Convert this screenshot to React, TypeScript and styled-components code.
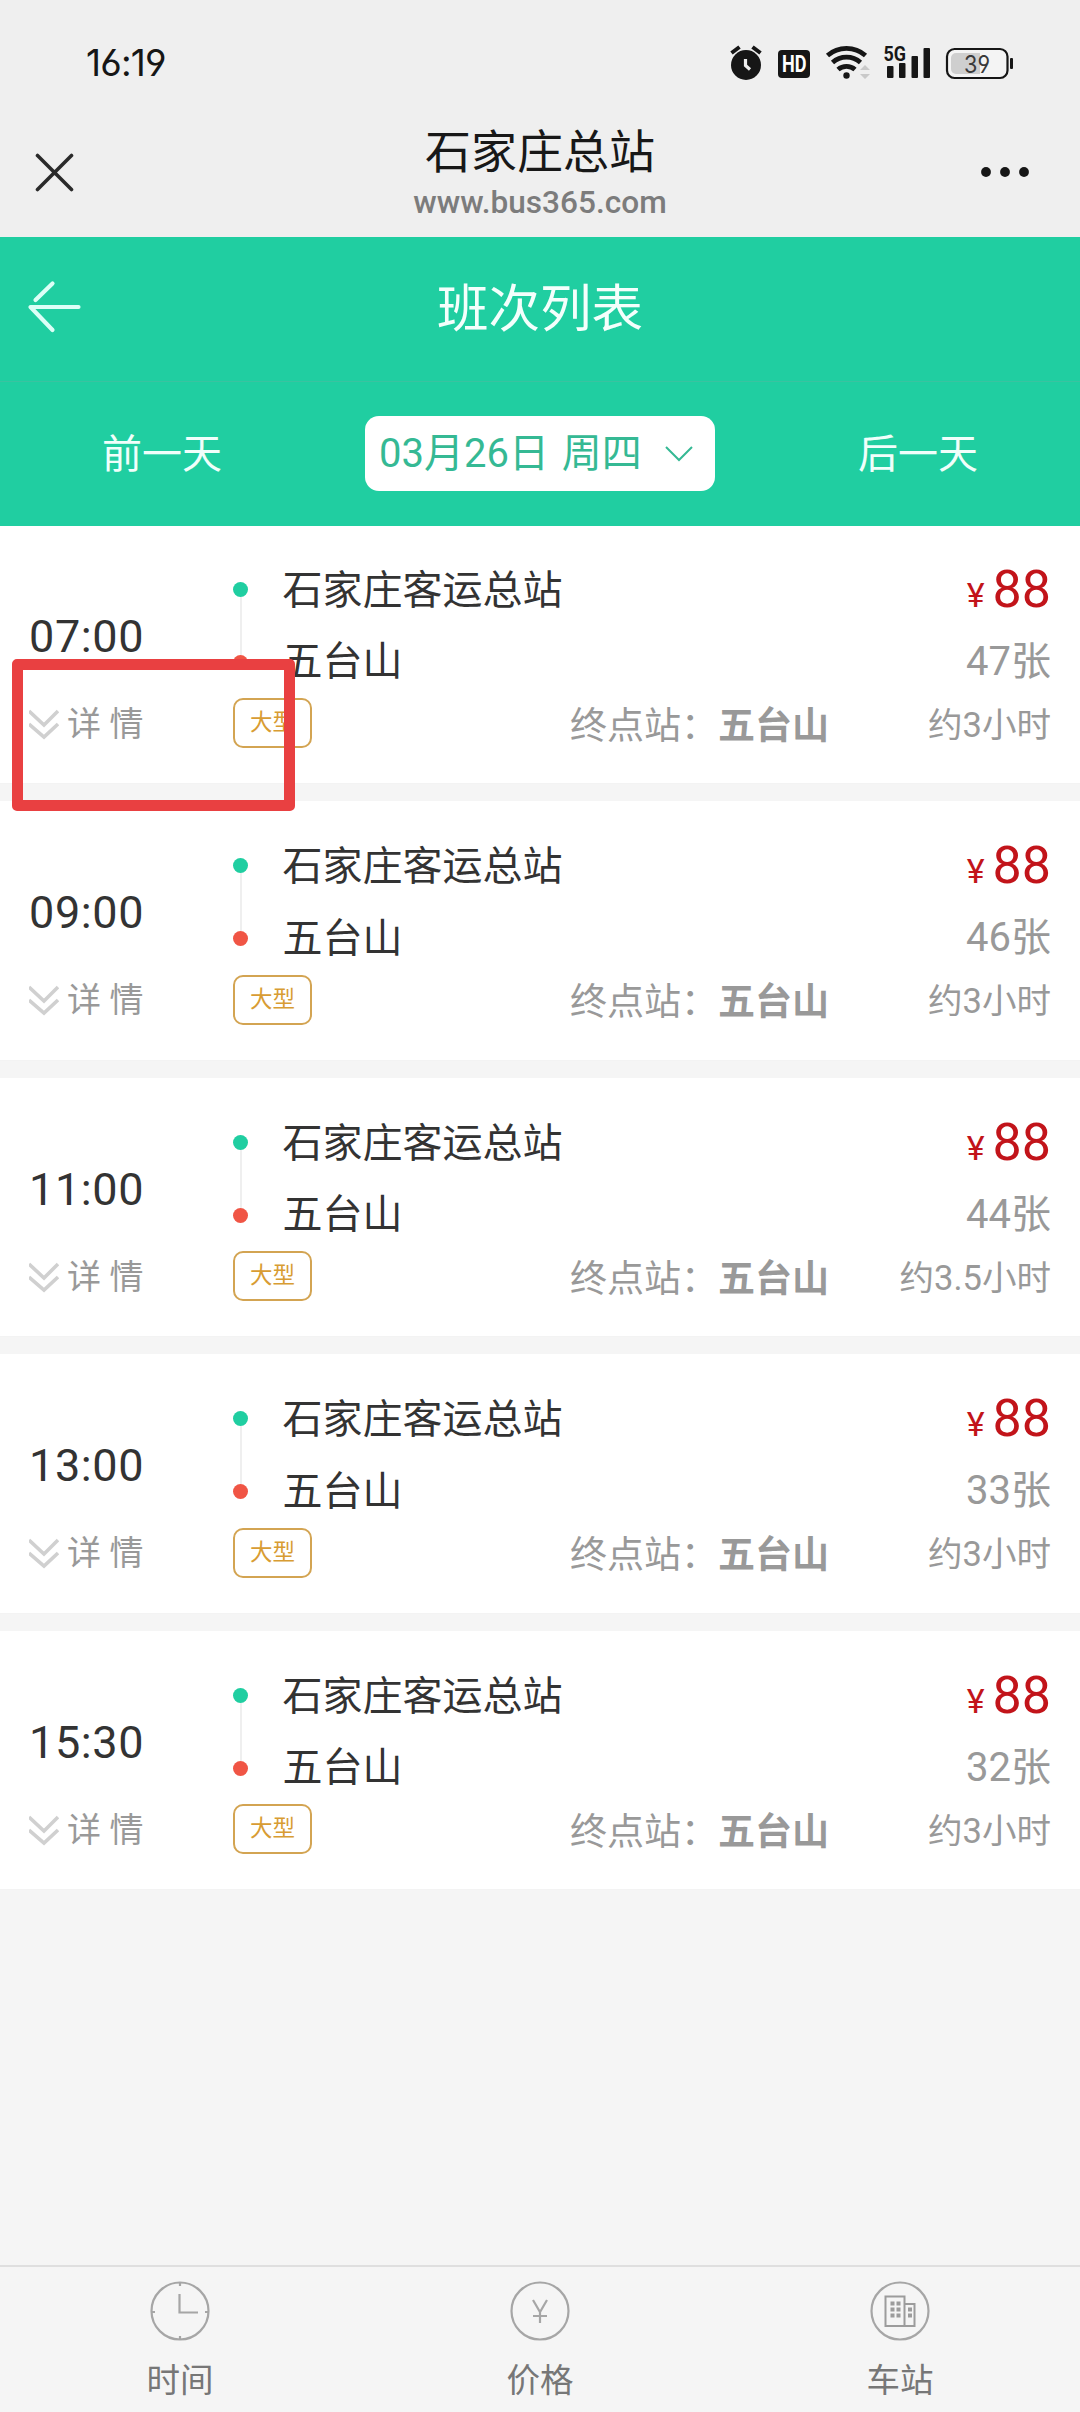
import React from 'react';
import styled, { createGlobalStyle } from 'styled-components';

const GlobalStyle = createGlobalStyle`
  * { box-sizing: border-box; }
  body {
    margin: 0;
    background: #f5f5f5;
    font-family: Roboto, "Noto Sans CJK SC", sans-serif;
    color: #333;
  }
  svg { display: block; }
`;

const Page = styled.div`
  width: 1080px;
  height: 2412px;
  display: flex;
  flex-direction: column;
  position: relative;
  overflow: hidden;
  background: #f5f5f5;
`;

const StatusBar = styled.div`
  height: 110px;
  flex: none;
  display: flex;
  justify-content: space-between;
  align-items: center;
  padding: 16px 66px 0 86px;
  background: #efefef;
`;

const Clock = styled.span`
  font-family: Inter, Roboto, sans-serif;
  font-feature-settings: "cv03", "cv04";
  font-size: 37px;
  line-height: 44px;
  font-weight: 400;
  letter-spacing: -0.8px;
  color: #161616;
`;

const StatusIcons = styled.div`
  display: flex;
  align-items: center;
`;

const BrowserBar = styled.div`
  height: 127px;
  flex: none;
  display: grid;
  grid-template-columns: 200px 1fr 200px;
  background: #efefef;
`;

const BrowserSide = styled.div<{ $end?: boolean }>`
  display: flex;
  align-items: center;
  justify-content: ${p => (p.$end ? 'flex-end' : 'flex-start')};
  padding: 0 ${p => (p.$end ? 50 : 34)}px;
  height: 124px;
`;

const BrowserTitle = styled.div`
  text-align: center;
  padding-top: 12px;
`;

const SiteName = styled.div`
  font-size: 46px;
  line-height: 61px;
  color: #181818;
  font-weight: 400;
`;

const SiteUrl = styled.div`
  font-size: 31.6px;
  line-height: 40px;
  font-weight: 500;
  color: #7c7c7c;
`;

const NavBar = styled.header`
  height: 145px;
  flex: none;
  display: grid;
  grid-template-columns: 200px 1fr 200px;
  align-items: center;
  padding: 0 0 4px 27px;
  border-bottom: 1px solid #39c3a0;
  background: #20cea1;
`;

const NavTitle = styled.h1`
  margin: 6px 27px 0 0;
  text-align: center;
  font-size: 51.5px;
  line-height: 64px;
  font-weight: 400;
  color: #f4fffc;
`;

const DayBar = styled.div`
  height: 144px;
  flex: none;
  display: flex;
  align-items: center;
  justify-content: space-between;
  padding-bottom: 1px;
  background: #20cea1;
`;

const DayLink = styled.span`
  width: 324px;
  padding-top: 3px;
  text-align: center;
  font-size: 40px;
  line-height: 50px;
  color: #f0fffb;
`;

const DatePill = styled.div`
  width: 350px;
  height: 75px;
  padding: 1px 22px 0 14px;
  display: flex;
  align-items: center;
  justify-content: space-between;
  border-radius: 14px;
  background: #fff;
  color: #35b994;
  font-size: 40px;
  line-height: 50px;
`;

const DateText = styled.span`
  white-space: pre;
  word-spacing: 3px;
`;

const TripList = styled.main`
  flex: 1;
  display: flex;
  flex-direction: column;
  gap: 17px;
`;

const Card = styled.section`
  height: 259.5px;
  flex: none;
  display: flex;
  padding: 30px 29px 0;
  background: #fff;
  border-bottom: 1px solid #f3f3f3;
  &:first-child {
    height: 258px;
    padding-top: 28.5px;
  }
`;

const TimeColumn = styled.div`
  width: 204px;
  flex: none;
`;

const Departure = styled.div`
  margin-top: 52px;
  font-size: 45px;
  letter-spacing: 0.6px;
  line-height: 60px;
`;

const Details = styled.div`
  margin-top: 32px;
  display: flex;
  align-items: center;
  gap: 8px;
  font-size: 34px;
  line-height: 50px;
  color: #999;
`;

const Body = styled.div`
  flex: 1;
  display: flex;
  flex-direction: column;
`;

const BodyTop = styled.div`
  height: 143.5px;
  display: flex;
  justify-content: space-between;
`;

const Route = styled.div`
  display: flex;
  gap: 34.5px;
`;

const Rail = styled.div`
  width: 15px;
  padding-top: 27px;
  display: flex;
  flex-direction: column;
  align-items: center;
`;

const Dot = styled.span<{ $color: string }>`
  width: 15px;
  height: 15px;
  border-radius: 50%;
  background: ${p => p.$color};
`;

const RailLine = styled.span`
  width: 2px;
  height: 58px;
  background: #efefef;
`;

const Station = styled.div`
  font-size: 40px;
  line-height: 71.5px;
`;

const PriceColumn = styled.div`
  text-align: right;
`;

const Price = styled.div`
  height: 71px;
  display: flex;
  justify-content: flex-end;
  align-items: baseline;
  gap: 8px;
  font-size: 52px;
  line-height: 70px;
  color: #c2141a;
`;

const Yen = styled.span`
  font-size: 34px;
`;

const Seats = styled.div`
  font-size: 40px;
  line-height: 72px;
  color: #999;
`;

const BodyBottom = styled.div`
  height: 50px;
  display: flex;
  align-items: center;
  color: #999;
`;

const Tag = styled.span`
  width: 79px;
  height: 50px;
  border: 2px solid #d3a452;
  border-radius: 10px;
  text-align: center;
  font-size: 22.5px;
  line-height: 45px;
  color: #d89c33;
`;

const Terminal = styled.span`
  margin-left: 258px;
  padding-top: 7px;
  font-size: 37px;
  line-height: 50px;
  b { font-weight: 700; }
`;

const Duration = styled.span`
  flex: 1;
  padding-top: 3px;
  text-align: right;
  white-space: nowrap;
  font-size: 34.5px;
  line-height: 50px;
`;

const TabBar = styled.nav`
  height: 147px;
  flex: none;
  display: grid;
  grid-template-columns: repeat(3, 1fr);
  border-top: 2px solid #dfdfdf;
  background: #f5f5f5;
`;

const Tab = styled.div`
  display: flex;
  flex-direction: column;
  align-items: center;
  padding-top: 14px;
  gap: 20px;
  font-size: 33.5px;
  line-height: 40px;
  color: #777;
`;

const Highlight = styled.div`
  position: absolute;
  left: 12px;
  top: 659px;
  width: 283px;
  height: 152px;
  border: 11px solid #e94041;
  border-radius: 5px;
`;

const StatusGlyphs = () => (
  <svg width="286" height="40" viewBox="728 42 286 40" fill="#161616">
    <circle cx="746" cy="64" r="15" />
    <path d="M731.500 52l8-6M760.500 52l-8-6" stroke="#161616" strokeWidth="4" />
    <path d="M745.500 58v6.500l4.500 4" stroke="#efefef" strokeWidth="3.200" fill="none" />
    <rect x="778" y="49" width="32" height="28" rx="4" />
    <text x="782" y="71" fill="#fff" fontFamily="Roboto, sans-serif" fontWeight="700" fontSize="23" textLength="24.500" lengthAdjust="spacingAndGlyphs">HD</text>
    <g fill="none" stroke="#161616" strokeWidth="4.800">
      <path d="M827.500 54.500a29 29 0 0 1 38 0" />
      <path d="M832.500 61.500a21 21 0 0 1 28 0" />
      <path d="M838 68.500a13 13 0 0 1 17 0" />
    </g>
    <circle cx="846.500" cy="74.500" r="3.200" />
    <path d="M860 69l5-5 5 5zM860 73l5 5 5-5z" fill="#c9c9c9" />
    <text x="883.500" y="60" fontFamily="Roboto, sans-serif" fontWeight="700" fontSize="21" textLength="22.500" lengthAdjust="spacingAndGlyphs">5G</text>
    <rect x="887" y="65" width="6.500" height="12" rx="1" />
    <rect x="899" y="62" width="6.500" height="15" rx="1" />
    <rect x="911.500" y="55" width="6.500" height="22" rx="1" />
    <rect x="923.500" y="47" width="6.500" height="30" rx="1" />
    <rect x="947" y="48" width="60.500" height="29" rx="7.500" fill="#f4f4f4" stroke="#161616" strokeWidth="2.200" />
    <path d="M980 52H956a5 5 0 0 0-5 5v11a5 5 0 0 0 5 5H980z" fill="#cfcfcf" />
    <rect x="1010" y="57" width="3" height="11" rx="1" />
    <text x="964" y="71.500" fill="#3a3a3a" fontFamily="Inter, Roboto, sans-serif" fontSize="24" textLength="26" lengthAdjust="spacingAndGlyphs" style={{ fontFeatureSettings: '"cv03","cv04"' }}>39</text>
  </svg>
);

const CloseIcon = () => (
  <svg width="40" height="40" viewBox="0 0 40 40" stroke="#2a2a2a" strokeWidth="3.600" strokeLinecap="round">
    <path d="M3.500 3.500l34 34M37.500 3.500l-34 34" />
  </svg>
);

const MoreIcon = () => (
  <svg width="50" height="12" viewBox="0 0 50 12" fill="#161616">
    <circle cx="6" cy="6" r="4.900" />
    <circle cx="25" cy="6" r="4.900" />
    <circle cx="44" cy="6" r="4.900" />
  </svg>
);

const BackIcon = () => (
  <svg width="54" height="54" viewBox="0 0 54 54" fill="none" stroke="#dcfff7" strokeWidth="4.200" strokeLinecap="round" strokeLinejoin="round">
    <path d="M25.500 3.500L8.500 20M25.500 50L3.500 27h48" />
  </svg>
);

const ChevronIcon = () => (
  <svg width="28" height="18" viewBox="0 0 28 18" fill="none" stroke="#35b994" strokeWidth="2">
    <path d="M1 2l13 13L27 2" />
  </svg>
);

const DoubleChevron = () => (
  <svg width="30" height="32" viewBox="0 0 30 32" fill="none" stroke="#d0d0d0" strokeWidth="3.600">
    <path d="M0 3l15 14L29 3M0 16l15 13L29 16" />
  </svg>
);

const TimeIcon = () => (
  <svg width="60" height="60" viewBox="0 0 60 60" fill="none" stroke="#a6a6a6" strokeWidth="2.200">
    <circle cx="30" cy="30" r="28.500" />
    <path d="M29.500 13v18.500H48M30 1v4M30 55v4M1 31h4M55 31h4" />
  </svg>
);

const PriceIcon = () => (
  <svg width="60" height="60" viewBox="0 0 60 60" fill="none" stroke="#a6a6a6" strokeWidth="2.200">
    <circle cx="30" cy="30" r="28.500" />
    <path d="M23 19l7 12 7-12M30 31v11M23 35h14" />
  </svg>
);

const StationIcon = () => (
  <svg width="60" height="60" viewBox="0 0 60 60" fill="none" stroke="#9c9c9c" strokeWidth="2">
    <circle cx="30" cy="30" r="28.500" stroke="#a6a6a6" strokeWidth="2.200" />
    <path d="M15.500 15.500h19v29.500h-19zM34.500 23h10v22h-10z" />
    <path d="M20.500 22.500h4M26.500 22.500h4M20.500 28.500h4M26.500 28.500h4M20.500 34.500h4M26.500 34.500h4M38 28.500h4M38 34.500h4" strokeWidth="4" />
  </svg>
);

const trips = [
  { time: '07:00', seats: 47, duration: '约3小时' },
  { time: '09:00', seats: 46, duration: '约3小时' },
  { time: '11:00', seats: 44, duration: '约3.5小时' },
  { time: '13:00', seats: 33, duration: '约3小时' },
  { time: '15:30', seats: 32, duration: '约3小时' },
];

const tabs = [
  { label: '时间', Icon: TimeIcon },
  { label: '价格', Icon: PriceIcon },
  { label: '车站', Icon: StationIcon },
];

export default function App() {
  return (
    <Page>
      <GlobalStyle />
      <StatusBar>
        <Clock>16:19</Clock>
        <StatusIcons><StatusGlyphs /></StatusIcons>
      </StatusBar>
      <BrowserBar>
        <BrowserSide><CloseIcon /></BrowserSide>
        <BrowserTitle>
          <SiteName>石家庄总站</SiteName>
          <SiteUrl>www.bus365.com</SiteUrl>
        </BrowserTitle>
        <BrowserSide $end><MoreIcon /></BrowserSide>
      </BrowserBar>
      <NavBar>
        <BackIcon />
        <NavTitle>班次列表</NavTitle>
      </NavBar>
      <DayBar>
        <DayLink>前一天</DayLink>
        <DatePill>
          <DateText>03月26日 周四</DateText>
          <ChevronIcon />
        </DatePill>
        <DayLink>后一天</DayLink>
      </DayBar>
      <TripList>
        {trips.map(trip => (
          <Card key={trip.time}>
            <TimeColumn>
              <Departure>{trip.time}</Departure>
              <Details><DoubleChevron />详 情</Details>
            </TimeColumn>
            <Body>
              <BodyTop>
                <Route>
                  <Rail>
                    <Dot $color="#20cea1" />
                    <RailLine />
                    <Dot $color="#f05545" />
                  </Rail>
                  <div>
                    <Station>石家庄客运总站</Station>
                    <Station>五台山</Station>
                  </div>
                </Route>
                <PriceColumn>
                  <Price><Yen>¥</Yen>88</Price>
                  <Seats>{trip.seats}张</Seats>
                </PriceColumn>
              </BodyTop>
              <BodyBottom>
                <Tag>大型</Tag>
                <Terminal>终点站：<b>五台山</b></Terminal>
                <Duration>{trip.duration}</Duration>
              </BodyBottom>
            </Body>
          </Card>
        ))}
      </TripList>
      <TabBar>
        {tabs.map(({ label, Icon }) => (
          <Tab key={label}><Icon />{label}</Tab>
        ))}
      </TabBar>
      <Highlight />
    </Page>
  );
}
